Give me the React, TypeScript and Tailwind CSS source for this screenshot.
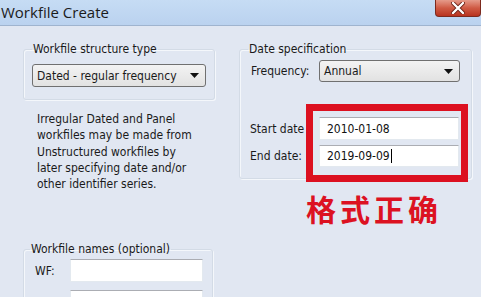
import type { ReactNode } from "react";

const ui = { fontFamily: '"DejaVu Sans Condensed", "DejaVu Sans", Tahoma, sans-serif' };

function Combo({ value, className }: { value: string; className: string }) {
  return (
    <div
      className={`flex items-center justify-between rounded-[3px] border border-[#707070] bg-gradient-to-b from-[#f3f3f3] to-[#e2e2e2] pl-[4px] pr-[6px] text-[12px] text-[#1a1a1a] ${className}`}
    >
      <span>{value}</span>
      <svg width="9" height="5" viewBox="0 0 9 5">
        <path d="M0 0 H9 L4.5 5 Z" fill="#111" />
      </svg>
    </div>
  );
}

function Field({ value, className, caret }: { value?: string; className: string; caret?: boolean }) {
  return (
    <div
      className={`flex items-center border border-[#e3e9ef] border-t-[#abadb3] bg-white pl-[7px] text-[12px] text-[#111] ${className}`}
    >
      {value}
      {caret && <span className="ml-[1px] inline-block h-[14px] w-[1px] bg-black" />}
    </div>
  );
}

function Group({ title, className, children }: { title: string; className: string; children: ReactNode }) {
  return (
    <fieldset
      className={`rounded-[3px] border border-[#d3dbe6] shadow-[inset_1px_1px_0_#f4f7fb,1px_1px_0_#f4f7fb] ${className}`}
    >
      <legend className="px-[1px] text-[12px] leading-[14px] text-[#1a1a1a]">{title}</legend>
      {children}
    </fieldset>
  );
}

export default function App() {
  return (
    <div className="relative h-[297px] w-[481px] overflow-hidden bg-[#e1e7f2]" style={ui}>
      <div className="flex h-[26px] items-start justify-between border-b border-[#9fb4cf] bg-gradient-to-b from-[#c6dcf4] to-[#bad2ef]">
        <span
          className="mt-[2px] pl-[1px] text-[15px] leading-[20px] text-[#1b1b1b]"
          style={{ fontFamily: '"Open Sans", "Noto Sans", sans-serif' }}
        >
          Workfile Create
        </span>
        <div className="flex h-[17px] w-[46px] items-center justify-center rounded-b-[4px] border border-t-0 border-[#7c2a1e] bg-gradient-to-b from-[#e59a8a] via-[#cf5a44] to-[#b8321e]">
          <svg width="14" height="12" viewBox="0 0 14 12">
            <path d="M2 1 L12 11 M12 1 L2 11" stroke="#6b2015" strokeWidth="4" strokeLinecap="round" />
            <path d="M2 1 L12 11 M12 1 L2 11" stroke="#fff" strokeWidth="2.4" strokeLinecap="round" />
          </svg>
        </div>
      </div>

      <div className="flex pt-[16px]">
        <div className="ml-[23px] flex w-[190px] flex-col">
          <Group title="Workfile structure type" className="px-[8px] pb-[12px] pt-[8px]">
            <Combo value="Dated - regular frequency" className="h-[23px] w-[174px]" />
          </Group>
          <p className="ml-[14px] mt-[11px] text-[12px] leading-[16.3px] text-[#1a1a1a]">
            Irregular Dated and Panel
            <br />
            workfiles may be made from
            <br />
            Unstructured workfiles by
            <br />
            later specifying date and/or
            <br />
            other identifier series.
          </p>
          <Group title="Workfile names (optional)" className="mt-[50px] px-[6px] pb-[10px] pt-[3px]">
            <div className="flex flex-col gap-[8px]">
              <div className="flex items-center">
                <span className="ml-[5px] w-[35px] text-[12px] text-[#1a1a1a]">WF:</span>
                <Field className="h-[23px] w-[133px]" />
              </div>
              <div className="flex items-center">
                <span className="ml-[5px] w-[35px] text-[12px] text-[#1a1a1a]">Page:</span>
                <Field className="h-[23px] w-[133px]" />
              </div>
            </div>
          </Group>
        </div>

        <div className="ml-[26px] flex w-[233px] flex-col">
          <Group title="Date specification" className="px-[8px] pb-[11px] pt-[4px]">
            <div className="flex items-center">
              <span className="ml-[3px] w-[68px] text-[12px] text-[#1a1a1a]">Frequency:</span>
              <Combo value="Annual" className="h-[22px] w-[141px]" />
            </div>
            <div className="mt-[35px] flex flex-col gap-[5px]">
              <div className="flex items-center">
                <span className="ml-[2px] w-[69px] text-[12px] text-[#1a1a1a]">Start date</span>
                <Field value="2010-01-08" className="h-[23px] w-[140px]" />
              </div>
              <div className="flex items-center">
                <span className="ml-[2px] w-[69px] text-[12px] text-[#1a1a1a]">End date:</span>
                <Field value="2019-09-09" caret className="h-[22px] w-[140px]" />
              </div>
            </div>
          </Group>
          <div
            className="ml-[67px] mt-[11px] text-[30px] font-bold leading-[36px] tracking-[4px] text-[#dc1222]"
            style={{ fontFamily: '"Noto Sans CJK SC", sans-serif' }}
          >
            格式正确
          </div>
        </div>
      </div>

      <div className="absolute left-[306px] top-[104px] h-[78px] w-[162px] border-[7px] border-[#dc1020]" />
    </div>
  );
}
